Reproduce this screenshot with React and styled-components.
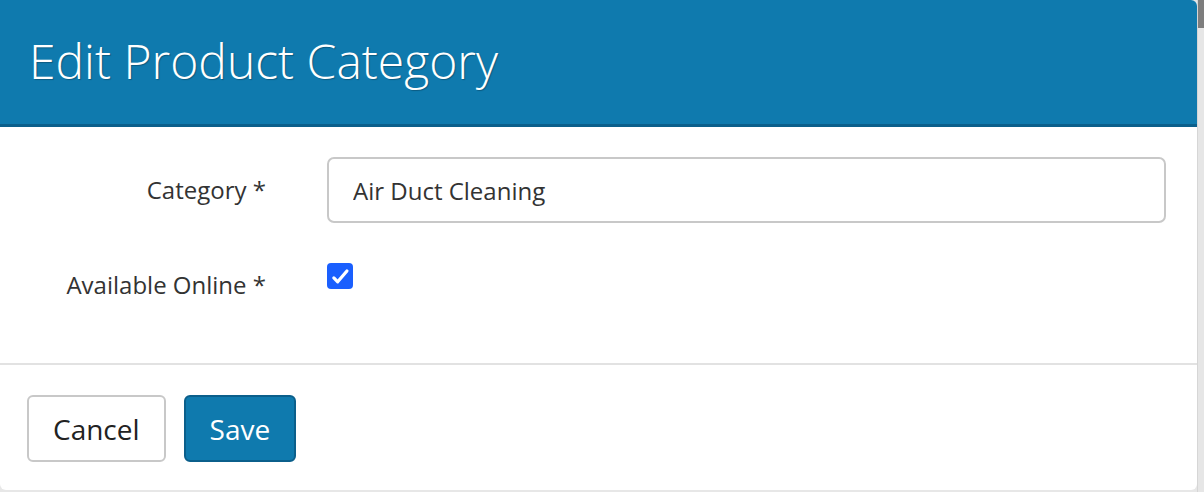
import React from "react";
import styled, { createGlobalStyle } from "styled-components";

const GlobalStyle = createGlobalStyle`
  html, body {
    margin: 0;
    padding: 0;
    background: #e7e7e7;
    font-family: "Open Sans", "Liberation Sans", sans-serif;
  }
`;

const Page = styled.div`
  display: flex;
  width: 1204px;
  height: 492px;
  overflow: hidden;
`;

const Modal = styled.div`
  display: flex;
  flex-direction: column;
  width: 1197px;
  height: 490px;
  background: #fff;
  border-radius: 0 6px 6px 6px;
  overflow: hidden;
`;

// strip of the page that peeks out behind the dialog
const Backdrop = styled.div`
  flex: 1;
  display: flex;
  flex-direction: column;
  background: #e6e6e6;
  border-left: 1px solid #d6d6d6;
`;

const BackdropTop = styled.div`
  height: 28px;
  background: #7d7d7d;
`;

const Header = styled.div`
  display: flex;
  align-items: center;
  height: 127px;
  padding: 0 29px;
  background: #0f7aae;
  border-bottom: 3px solid #0b5f8b;
  box-sizing: border-box;
  flex-shrink: 0;
`;

const Title = styled.h1`
  margin: 0 0 4px;
  font-size: 48px;
  font-weight: 300;
  color: #fff;
  text-shadow: 1px 1px 1px rgba(0, 0, 0, 0.25);
`;

const Body = styled.div`
  display: flex;
  flex-direction: column;
  gap: 40px;
  padding: 30px 31px 0 0;
  height: 238px;
  box-sizing: border-box;
  border-bottom: 2px solid #e2e2e2;
`;

const Row = styled.div`
  display: grid;
  grid-template-columns: 266px 1fr;
  column-gap: 61px;
  align-items: ${(p) => (p.$top ? "start" : "center")};
`;

const Label = styled.label`
  text-align: right;
  font-size: 24px;
  line-height: 36px;
  color: #333;
  padding-top: ${(p) => (p.$offset ? "4px" : "0")};
`;

const TextInput = styled.input`
  height: 66px;
  box-sizing: border-box;
  padding: 0 24px;
  border: 2px solid #c8c8c8;
  border-radius: 7px;
  font-family: inherit;
  font-size: 24px;
  color: #333;
  outline: none;
`;

const CheckBox = styled.span`
  display: flex;
  align-items: center;
  justify-content: center;
  width: 26px;
  height: 26px;
  border-radius: 4px;
  background: #1a5ffe;
`;

const Footer = styled.div`
  display: flex;
  gap: 18px;
  padding: 30px 27px 0;
`;

const Button = styled.button`
  height: 67px;
  padding: 0 24px;
  border-radius: 6px;
  font-family: inherit;
  font-size: 28px;
  border: 2px solid ${(p) => (p.$primary ? "#0b5f8b" : "#c8c8c8")};
  background: ${(p) => (p.$primary ? "#0f7aae" : "#fff")};
  color: ${(p) => (p.$primary ? "#fff" : "#222")};
  cursor: pointer;
`;

export default function App() {
  return (
    <>
      <GlobalStyle />
      <Page>
        <Modal>
          <Header>
            <Title>Edit Product Category</Title>
          </Header>
          <Body>
            <Row>
              <Label>Category *</Label>
              <TextInput defaultValue="Air Duct Cleaning" />
            </Row>
            <Row $top>
              <Label $offset>Available Online *</Label>
              <CheckBox>
                <svg width="20" height="20" viewBox="0 0 26 26">
                  <path
                    d="M5 15.5 L10 20.5 L22 6.5"
                    fill="none"
                    stroke="#fff"
                    strokeWidth="4.2"
                    strokeLinecap="round"
                    strokeLinejoin="round"
                  />
                </svg>
              </CheckBox>
            </Row>
          </Body>
          <Footer>
            <Button>Cancel</Button>
            <Button $primary>Save</Button>
          </Footer>
        </Modal>
        <Backdrop>
          <BackdropTop />
        </Backdrop>
      </Page>
    </>
  );
}
